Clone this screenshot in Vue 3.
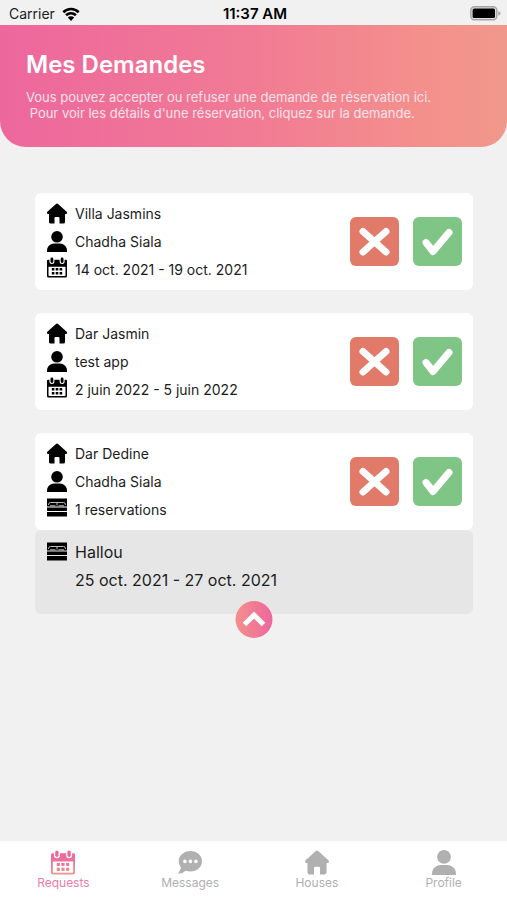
<script setup>
import { ref } from 'vue';

const requests = ref([
    { id: 1, house: 'Villa Jasmins', guest: 'Chadha Siala', icon: 'calendar', info: '14 oct. 2021 - 19 oct. 2021' },
    { id: 2, house: 'Dar Jasmin', guest: 'test app', icon: 'calendar', info: '2 juin 2022 - 5 juin 2022' },
    {
        id: 3,
        house: 'Dar Dedine',
        guest: 'Chadha Siala',
        icon: 'bed',
        info: '1 reservations',
        open: true,
        rooms: [{ name: 'Hallou', dates: '25 oct. 2021 - 27 oct. 2021' }],
    },
]);

const tabs = [
    { label: 'Requests', icon: 'calendar' },
    { label: 'Messages', icon: 'chat' },
    { label: 'Houses', icon: 'home' },
    { label: 'Profile', icon: 'person' },
];
const activeTab = ref('Requests');

function removeRequest(id) {
    requests.value = requests.value.filter((r) => r.id !== id);
}
</script>

<template>
    <div class="screen">
        <!-- Shared icons -->
        <svg class="sprite" aria-hidden="true">
            <defs>
                <linearGradient id="tab-gradient" gradientUnits="userSpaceOnUse" x1="0" y1="0" x2="0" y2="20">
                    <stop offset="0" stop-color="#ec669c" />
                    <stop offset=".5" stop-color="#ee7398" />
                    <stop offset="1" stop-color="#f2958a" />
                </linearGradient>
            </defs>
            <symbol id="home" viewBox="0 0 20 21">
                <path d="M9 .9q1-.8 2 0l8.400 7.600q1 1 .4 1.900-.4.600-1.300.6H18v8q0 1.500-1.500 1.500h-4V15q0-1-1-1h-3q-1 0-1 1v5.500h-4Q2 20.500 2 19v-8h-.5q-.9 0-1.300-.6-.6-.9.4-1.900z" />
            </symbol>
            <symbol id="person" viewBox="0 0 20 21">
                <circle cx="10" cy="5.800" r="5.800" />
                <path d="M0 21v-1.500c0-4 3.500-7 7-7h6c3.500 0 7 3 7 7V21z" />
            </symbol>
            <symbol id="calendar" viewBox="0 0 20 20">
                <path fill-rule="evenodd" d="M0 3.500Q0 2.300 1.200 2.300h1.200V4a2.500 2.500 0 0 0 5 0V2.300h5.200V4a2.500 2.500 0 0 0 5 0V2.300h1.200Q20 2.300 20 3.500v15q0 1.500-1.500 1.500h-17Q0 20 0 18.500zM1.500 9.200V17.800q0 .8.8.8h15.400q.8 0 .8-.8V9.200z" />
                <rect x="3.500" y="0" width="2.800" height="5.400" rx="1.400" />
                <rect x="13.700" y="0" width="2.800" height="5.400" rx="1.400" />
                <path d="M4.800 10.400h2.600V13H4.800zM8.700 10.400h2.600V13H8.700zM12.600 10.400h2.600V13h-2.600zM4.800 14.400h2.600V17H4.800zM8.700 14.400h2.600V17H8.700zM12.600 14.400h2.600V17h-2.600z" />
            </symbol>
            <symbol id="bed" viewBox="0 0 20 18">
                <path d="M0 0h20v8H0zM0 9h20v3.400H0zM0 13.400h20V18H0z" />
                <path class="bed-pillow" d="M1.500 6.500Q1.500 4 3.500 4h13q2 0 2 2.500M3 7.300h5.500M11.500 7.300H17M10 4v3" />
            </symbol>
            <symbol id="chat" viewBox="0 0 24 23">
                <path fill-rule="evenodd" d="M12.500 0C19 0 24 4.600 24 10.300s-5 10.300-11.500 10.300q-2.500 0-4.700-.8Q4.500 22.800.6 22.600q-.6-.3-.2-.8Q2.700 19.200 2.900 16.400.7 13.700.7 10.300C.7 4.600 6 0 12.500 0zM6.900 8.600a1.800 1.800 0 1 0 0 3.600 1.800 1.800 0 0 0 0-3.600zM12.400 8.600a1.800 1.800 0 1 0 0 3.600 1.800 1.800 0 0 0 0-3.600zM17.900 8.600a1.800 1.800 0 1 0 0 3.600 1.800 1.800 0 0 0 0-3.600z" />
            </symbol>
        </svg>

        <!-- Status bar -->
        <div class="status">
            <div class="carrier">
                <span>Carrier</span>
                <svg class="wifi" viewBox="0 0 18 14" aria-hidden="true">
                    <path d="M1.300 5.200a11 11 0 0 1 15.400 0M4.100 8.200a7 7 0 0 1 9.800 0" />
                    <path class="wifi-dot" d="M9 14 5.800 10.600a4.600 4.600 0 0 1 6.400 0z" />
                </svg>
            </div>
            <span class="time">11:37 AM</span>
            <svg class="battery" viewBox="0 0 31 15" aria-hidden="true">
                <rect x=".8" y=".8" width="26" height="13" rx="3.500" fill="#ddd" stroke="#a5a5a5" stroke-width="1.400" />
                <rect x="2.600" y="2.600" width="22.400" height="9.400" rx="1.500" />
                <path fill="#a5a5a5" d="M28.300 5q2.200 1 2.200 2.400t-2.200 2.400z" />
            </svg>
        </div>

        <header class="header">
            <h1>Mes Demandes</h1>
            <p>Vous pouvez accepter ou refuser une demande de réservation ici.<br />&nbsp;Pour voir les détails d'une réservation, cliquez sur la demande.</p>
        </header>

        <main class="list">
            <article v-for="request in requests" :key="request.id" class="request">
                <div class="card">
                    <ul class="details">
                        <li>
                            <svg class="icon"><use href="#home" /></svg>
                            <span>{{ request.house }}</span>
                        </li>
                        <li>
                            <svg class="icon"><use href="#person" /></svg>
                            <span>{{ request.guest }}</span>
                        </li>
                        <li>
                            <svg class="icon icon-raised"><use :href="'#' + request.icon" /></svg>
                            <span>{{ request.info }}</span>
                        </li>
                    </ul>
                    <div class="actions">
                        <button class="action refuse" aria-label="Refuser" @click="removeRequest(request.id)">
                            <svg viewBox="0 0 49 49"><path d="M13 14.500 36 35M36 14.500 13 35" /></svg>
                        </button>
                        <button class="action accept" aria-label="Accepter" @click="removeRequest(request.id)">
                            <svg viewBox="0 0 49 49"><path d="M13 25.500 20 34.500 36 15.500" /></svg>
                        </button>
                    </div>
                </div>

                <!-- Rooms of the house -->
                <div v-if="request.rooms" class="rooms">
                    <template v-if="request.open">
                        <div v-for="room in request.rooms" :key="room.name" class="room">
                            <svg class="icon"><use href="#bed" /></svg>
                            <div>
                                <div>{{ room.name }}</div>
                                <div>{{ room.dates }}</div>
                            </div>
                        </div>
                    </template>
                    <button class="toggle" :class="{ closed: !request.open }" aria-label="Détails" @click="request.open = !request.open">
                        <svg viewBox="0 0 37 37"><path d="M9 23.500 18.500 14 28 23.500" /></svg>
                    </button>
                </div>
            </article>
        </main>

        <nav class="tabs">
            <button v-for="tab in tabs" :key="tab.label" class="tab" :class="{ active: tab.label === activeTab }" @click="activeTab = tab.label">
                <svg class="tab-icon"><use :href="'#' + tab.icon" /></svg>
                <span>{{ tab.label }}</span>
            </button>
        </nav>
    </div>
</template>

<style>
body {
    background: #f1f1f1;
}
</style>

<style scoped>
.screen {
    display: flex;
    flex-direction: column;
    min-height: 100vh;
    background: #f1f1f1;
    color: #1c1c1c;
    font-family: Inter, "Liberation Sans", sans-serif;
    font-size: 13px;
}

.sprite {
    position: absolute;
    width: 0;
    height: 0;
}

.bed-pillow {
    fill: none;
    stroke: #bbb;
    stroke-width: 1;
}

button {
    padding: 0;
    border: 0;
    font: inherit;
    cursor: pointer;
}

/* Status bar */
.status {
    display: grid;
    grid-template-columns: 1fr auto 1fr;
    align-items: center;
    height: 25px;
    padding: 2px 6px 0 9px;
    box-sizing: border-box;
    font-size: 14px;
}

.carrier {
    display: flex;
    align-items: center;
    gap: 7px;
}

.wifi {
    width: 18px;
    height: 14px;
    fill: none;
    stroke: #000;
    stroke-width: 2.6;
}

.wifi-dot {
    fill: #000;
    stroke: none;
}

.time {
    font-size: 15px;
    font-weight: 600;
    color: #000;
}

.battery {
    justify-self: end;
    width: 31px;
    height: 15px;
}

/* Header */
.header {
    padding: 24px 26px 26px;
    border-radius: 0 0 26px 26px;
    background: linear-gradient(90deg, #ed679d 0%, #f17b94 50%, #f4908c 84%, #f0988b 100%);
    color: #fff;
}

h1 {
    margin: 0 0 8px;
    font-size: 24px;
    line-height: 32px;
    font-weight: 600;
}

.header p {
    margin: 0;
    line-height: 16px;
    color: #fde3ea;
}

/* Requests */
.list {
    display: flex;
    flex: 1;
    flex-direction: column;
    gap: 23px;
    padding: 46px 34px 46px 35px;
}

.card {
    display: flex;
    align-items: center;
    justify-content: space-between;
    padding: 6px 11px 7px 12px;
    border-radius: 6px;
    background: #fff;
}

.details {
    margin: 0;
    padding: 0;
    list-style: none;
    font-size: 14px;
}

.details li {
    display: flex;
    align-items: center;
    gap: 8px;
    height: 28px;
}

.icon {
    flex: none;
    width: 20px;
    height: 21px;
    fill: #000;
}

.icon-raised {
    margin-bottom: 4px;
}

.actions {
    display: flex;
    gap: 14px;
}

.action {
    width: 49px;
    height: 49px;
    border-radius: 6px;
}

.action svg {
    display: block;
    fill: none;
    stroke: #fff;
    stroke-width: 7;
    stroke-linecap: round;
    stroke-linejoin: round;
}

.refuse {
    background: #e27a69;
}

.accept {
    background: #7fc686;
}

.rooms {
    position: relative;
    min-height: 20px;
    padding: 8px 12px 20px;
    border-radius: 6px;
    background: #e6e6e6;
}

.room {
    display: flex;
    gap: 8px;
    font-size: 16px;
    line-height: 28px;
}

.room .icon {
    margin-top: 3px;
}

.toggle {
    position: absolute;
    bottom: -24px;
    left: 50%;
    width: 37px;
    height: 37px;
    border-radius: 50%;
    background: linear-gradient(90deg, #f4908c, #ed679d);
    transform: translateX(-50%);
}

.toggle svg {
    display: block;
    fill: none;
    stroke: #fff;
    stroke-width: 5;
}

.toggle.closed svg {
    transform: rotate(180deg);
}

/* Bottom tabs */
.tabs {
    display: grid;
    grid-template-columns: repeat(4, 1fr);
    height: 59px;
    background: #fff;
}

.tab {
    display: flex;
    flex-direction: column;
    align-items: center;
    padding-top: 9px;
    background: none;
    color: #b0b0b0;
    font-size: 12px;
    line-height: 16px;
}

.tab-icon {
    width: 24px;
    height: 25px;
    fill: #b0b0b0;
}

.active {
    color: #ee7ba5;
}

.active .tab-icon {
    fill: url(#tab-gradient);
}
</style>
